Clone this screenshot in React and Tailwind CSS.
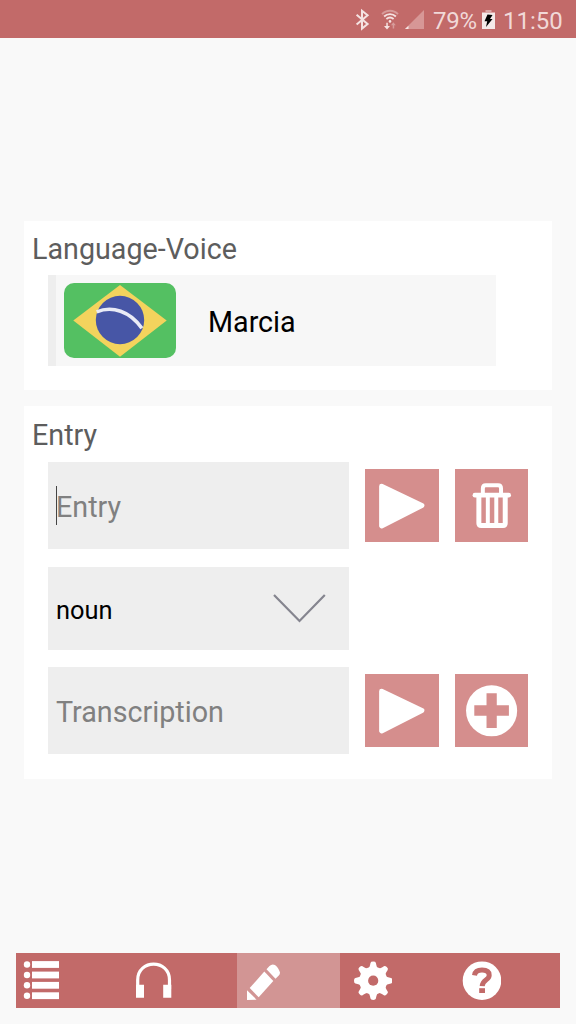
import React from 'react';

function StatusBar() {
  return (
    <header className="flex h-[38px] shrink-0 items-center justify-end bg-[#c26a69] pr-[13px] text-[24px] text-[#f1d9d8]">
      <svg className="h-[38px] w-[76px]" viewBox="350 0 76 38" fill="none">
        <path d="M356.6 14.8 L367.6 24 L362 28.6 V10.8 L367.6 15.2 L356.6 24.6" stroke="#f5e3e2" strokeWidth="2" />
        <path d="M382 14.2 C386.5 9.6 393.5 9.6 398 14.2" stroke="#d79c9b" strokeWidth="1.8" />
        <path d="M384.1 16.5 C387.5 13.2 392.5 13.2 395.9 16.5 M386.4 19 C388.5 17.2 391.5 17.2 393.6 19" stroke="#f5e3e2" strokeWidth="1.8" />
        <circle cx="390" cy="21.4" r="1.3" fill="#f5e3e2" />
        <path d="M386.3 22.7 V26 H384 L387 29.5 L390 26 H387.8 V22.7Z" fill="#f5e3e2" />
        <path d="M392.7 28.5 V25.3 H391 L393.3 22.3 L395.8 25.3 H394.2 V28.5Z" fill="#d79c9b" />
        <path d="M424 10 V29 H405Z" fill="#d79796" />
        <path d="M408.5 25.8 V29 H405Z" fill="#f5e3e2" />
      </svg>
      <span className="ml-[7px] w-[44px] whitespace-nowrap pt-[3px] font-[Roboto] tracking-[-0.2px]">79%</span>
      <svg className="ml-[4px] h-[38px] w-[15px]" viewBox="481 0 15 38">
        <path d="M485.5 10 H491.5 V12 H495 V16 H482 V12 H485.5Z" fill="#dda9a8" />
        <path d="M482 13 H495 V29 H482Z" fill="#f5e9e8" />
        <path d="M487.5 14.5 L492.5 15 L490 19 H492.5 L486 27 L487.2 21.3 H484.5Z" fill="#000" />
      </svg>
      <span className="ml-[7px] w-[60px] whitespace-nowrap pt-[3px] font-[Roboto]">11:50</span>
    </header>
  );
}

function BrazilFlag() {
  return (
    <svg className="h-[75px] w-[112px]" viewBox="0 0 112 75">
      <rect width="112" height="75" rx="10" fill="#54c062" />
      <path d="M9.3 37.6 L56 2 L102.7 37.6 L56 73.8Z" fill="#f3d35d" />
      <circle cx="56" cy="37" r="24.2" fill="#4756a6" />
      <path d="M32.7 28.8 C48 22.5 66 28 77.9 45.3" fill="none" stroke="#e9ebf6" strokeWidth="3.6" />
    </svg>
  );
}

function ActionButton({ label, children }) {
  return (
    <button aria-label={label} className="h-[73.6px] w-[73.6px] bg-[#d58e8d]">
      <svg className="block h-full w-full" viewBox="0 0 74 74">{children}</svg>
    </button>
  );
}

const play = (
  <path d="M16.7 17.3 L57.2 36.7 L16.7 57.3Z" fill="#fff" stroke="#fff" strokeWidth="5" strokeLinejoin="round" />
);

const trash = (
  <g fill="none" stroke="#fff">
    <path d="M28 25 V19.5 Q28 16.3 31 16.3 H43.3 Q46.3 16.3 46.3 19.5 V25" strokeWidth="4" />
    <path d="M20 26.3 H54" strokeWidth="4.6" strokeLinecap="round" />
    <path d="M24 27 V54.5 Q24 56.7 26.3 56.7 H48.3 Q50.5 56.7 50.5 54.5 V27" strokeWidth="5" />
    <path d="M33 27 V57 M41.5 27 V57" strokeWidth="4" />
  </g>
);

const plus = (
  <>
    <circle cx="36.8" cy="37" r="25.7" fill="#fff" />
    <path d="M31.7 19.4 H42 V31.3 H54.2 V42 H42 V54.2 H31.7 V42 H19.4 V31.3 H31.7Z" fill="#d58e8d" />
  </>
);

function NavItem({ label, className, children }) {
  return (
    <button aria-label={label} className={className}>
      <svg className="h-[55px] w-[52px]" viewBox="0 0 52 55">{children}</svg>
    </button>
  );
}

function NavBar() {
  return (
    <nav className="mx-4 mb-4 flex h-[55px] shrink-0 bg-[#c26a69]">
      <NavItem label="List" className="w-[112px]">
        <g fill="#fff">
          {[11.5, 22, 32.3, 42.7].map((y) => (
            <g key={y}>
              <circle cx="11" cy={y} r="3.2" />
              <rect x="16" y={y - 3.4} width="27" height="6.8" />
            </g>
          ))}
        </g>
      </NavItem>
      <NavItem label="Listen" className="w-[109px]">
        <path d="M9.7 36 V27 C9.7 5.9 41.5 5.9 41.5 27 V36" fill="none" stroke="#fff" strokeWidth="3.2" />
        <path d="M8 31.8 H16 V44.8 H8Z M35.2 31.8 H43.3 V44.8 H35.2Z" fill="#fff" />
      </NavItem>
      <NavItem label="Edit" className="w-[103px] bg-[#d29594]">
        <path d="M10 47 V37.2 L19.6 46.7Z" fill="#fff" />
        <path d="M12.7 35 L27.3 18.5 L36.3 28 L21.7 44.3Z" fill="#fff" />
        <path d="M29.5 16.3 L32.5 13 Q35 10.6 38 12 C41 14 42.3 17.3 43 19.4 Q43 21.2 41.8 22.4 L38.5 25.7Z" fill="#fff" />
      </NavItem>
      <NavItem label="Settings" className="w-[109px]">
        <g transform="translate(33.2 27.7)" fill="#fff">
          {[0, 45, 90, 135, 180, 225, 270, 315].map((a) => (
            <path key={a} transform={`rotate(${a})`} d="M-6 -11 C-3.6 -13 -3.3 -15 -2.7 -17.8 Q-2.5 -19.2 0 -19.2 Q2.5 -19.2 2.7 -17.8 C3.3 -15 3.6 -13 6 -11Z" />
          ))}
          <circle r="14" />
          <circle r="5.1" fill="#c26a69" />
        </g>
      </NavItem>
      <NavItem label="Help" className="flex-1">
        <circle cx="33" cy="27.7" r="19.3" fill="#fff" />
        <path d="M25.5 22.3 C26.2 17.8 29.2 17.1 33 17.1 C37.7 17.1 40.2 18.9 40.2 22.2 C40.2 27.2 33.7 26.2 33.2 33.1" fill="none" stroke="#c26a69" strokeWidth="5" />
        <path d="M30.2 35.2 H36 V40 H30.2Z" fill="#c26a69" />
      </NavItem>
    </nav>
  );
}

export default function App() {
  return (
    <div className="flex h-[1024px] w-[576px] flex-col overflow-hidden bg-[#f9f9f9] font-[Roboto,sans-serif] text-[28.7px] leading-[34px]">
      <StatusBar />
      <main className="flex flex-1 flex-col gap-4 px-6 pt-[183px]">
        <section className="h-[169px] bg-white pt-[11px]">
          <h2 className="pl-2 text-[#5d5d5d]">Language-Voice</h2>
          <div className="ml-6 mt-[9px] flex h-[91px] w-[448px] items-center border-l-8 border-[#eee] bg-[#f7f7f7] pl-2 text-black">
            <BrazilFlag />
            <span className="ml-8 pt-[3px]">Marcia</span>
          </div>
        </section>
        <section className="h-[373px] bg-white pt-3">
          <h2 className="pl-2 text-[#5d5d5d]">Entry</h2>
          <div className="ml-6 mt-[10px] flex flex-col gap-[17.5px]">
            <div className="flex items-center gap-4">
              <div className="flex h-[87px] w-[301px] items-center bg-[#eee] pl-2 text-[#808080]">
                <span className="h-[39px] w-px bg-[#444]" />
                <span className="-ml-px pt-[3px]">Entry</span>
              </div>
              <ActionButton label="Play entry">{play}</ActionButton>
              <ActionButton label="Delete entry">{trash}</ActionButton>
            </div>
            <div className="flex h-[83px] w-[301px] items-center justify-between bg-[#eee] pl-2 pr-[22px] text-[25.4px] text-black">
              <span className="pt-[3px]">noun</span>
              <svg className="h-[32px] w-[56px]" viewBox="0 0 56 32">
                <path d="M3 3 L28.5 29 L53.8 3" fill="none" stroke="#85858f" strokeWidth="2.2" />
              </svg>
            </div>
            <div className="flex items-center gap-4">
              <div className="flex h-[87px] w-[301px] items-center bg-[#eee] pl-2 text-[#808080]">
                <span className="pt-[3px]">Transcription</span>
              </div>
              <ActionButton label="Play transcription">{play}</ActionButton>
              <ActionButton label="Add">{plus}</ActionButton>
            </div>
          </div>
        </section>
      </main>
      <NavBar />
    </div>
  );
}
